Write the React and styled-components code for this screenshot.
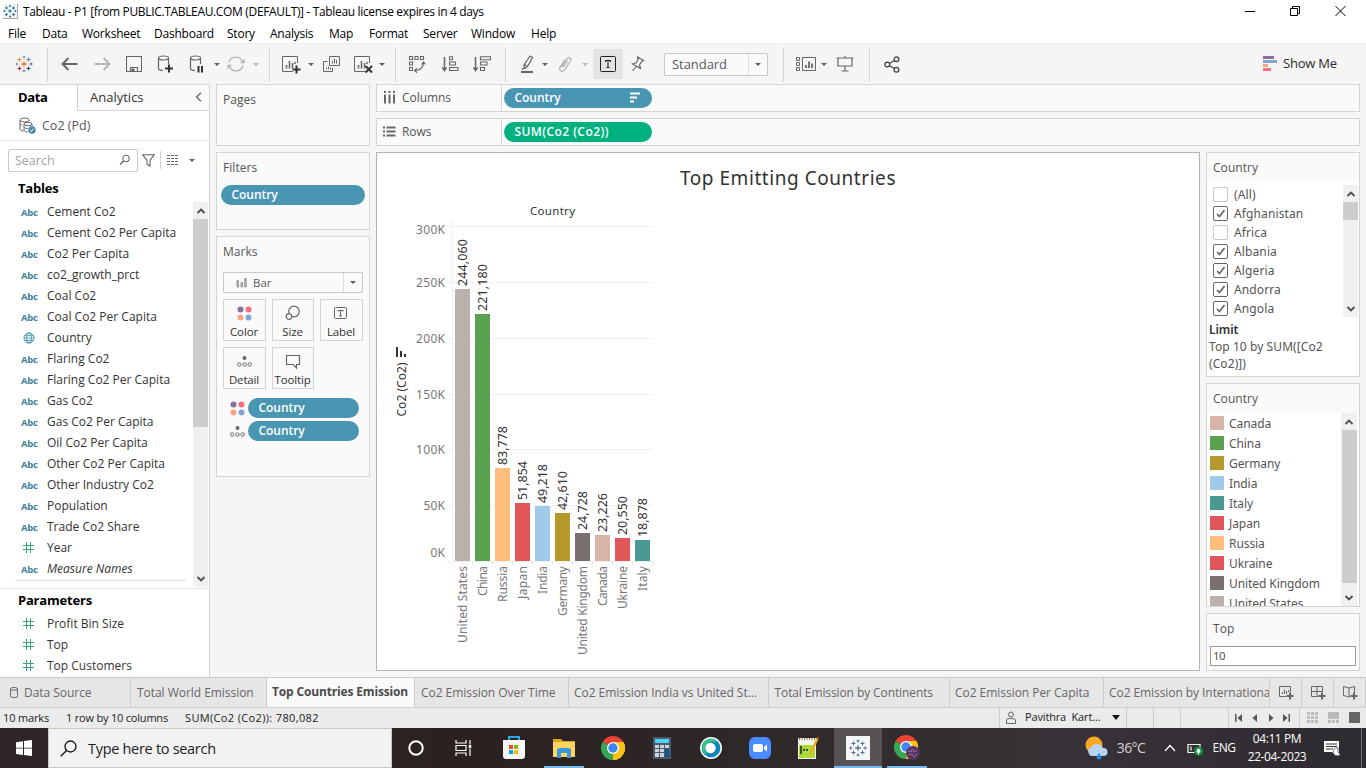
import React from "react";
import styled, { createGlobalStyle, css } from "styled-components";

const ui = '"Open Sans", "Noto Sans", sans-serif';
const chartFont = '"Noto Sans", "Open Sans", sans-serif';
const blue = "#4996b2";

const Global = createGlobalStyle`
  * { box-sizing: border-box; }
  html, body { margin: 0; padding: 0; }
  body { width: 1366px; height: 768px; overflow: hidden; font-family: ${ui}; font-size: 12px; color: #333; }
  svg { display: block; flex: none; }
`;

const Window = styled.div`
  width: 1366px; height: 768px; display: flex; flex-direction: column;
  background: #f5f5f5; white-space: nowrap; overflow: hidden;
`;
const TitleBar = styled.header`
  height: 23px; background: #fff; display: flex; align-items: center; padding-left: 3px; color: #000;
`;
const TitleText = styled.span`margin-left: 5px; font-size: 12px; letter-spacing: -0.34px;`;
const WindowButtons = styled.div`
  margin-left: auto; margin-right: 20px; margin-top: -2px; display: flex; gap: 35px;
`;
const MenuBar = styled.nav`
  height: 20px; background: #fff; display: flex; align-items: center; padding-left: 8px; color: #000; font-size: 12px;
`;
const MenuItem = styled.span`width: ${p => p.$w}px; letter-spacing: -0.22px;`;
const Toolbar = styled.div`
  height: 41px; background: #f5f5f5; border-top: 1px solid #f0f0f0; display: flex; align-items: center;
`;
const Slot = styled.div`
  width: ${p => p.$w}px; height: ${p => p.$h || 30}px; flex: none; display: flex; align-items: center; justify-content: center;
  margin-left: ${p => p.$gap || 0}px; background: ${p => (p.$on ? "#e4e4e4" : "transparent")};
`;
const ToolRule = styled.div`
  width: 1px; height: 35px; background: #d4d4d4; flex: none; margin-left: ${p => p.$gap || 0}px;
`;
const Caret = styled.i`
  width: 0; height: 0; flex: none; border: ${p => p.$s || 3}px solid transparent; border-bottom: 0;
  border-top: ${p => (p.$s || 3) + (p.$tall ? 1 : 0)}px solid ${p => p.$c || "#5f5f5f"};
`;
const Select = styled.div`
  width: ${p => p.$w}px; height: ${p => p.$h}px; border: 1px solid #c9c9c9; border-radius: 1px;
  display: flex; align-items: center; background: #fafafa; margin-left: ${p => p.$gap || 0}px;
`;
const SelectText = styled.span`
  flex: 1; padding-left: ${p => p.$pad}px; font-size: ${p => p.$fs}px; color: #5a5a5a; display: flex; gap: 6px; align-items: center;
  letter-spacing: ${p => p.$ls || 0}px;
`;
const SelectArrow = styled.span`
  width: 19px; align-self: stretch; border-left: 1px solid #dedede; display: flex; align-items: center; justify-content: center;
`;
const ShowMe = styled.div`
  margin-left: auto; width: 103px; display: flex; align-items: center; gap: 6px; font-size: 13px; color: #2b2b2b; letter-spacing: -0.2px;
  padding-bottom: 2px;
`;

const Workspace = styled.main`height: 593px; display: flex; background: #f5f5f5;`;
const DataPane = styled.aside`
  width: 210px; border-right: 1px solid #d4d4d4; background: #fff; display: flex; flex-direction: column; overflow: hidden;
`;
const PaneTabs = styled.div`height: 27px; flex: none; display: flex;`;
const PaneTab = styled.div`
  height: 27px; display: flex; align-items: center; font-size: 13px; border-top: 1px solid #d4d4d4; padding-bottom: 2px;
  ${p => p.$active
    ? css`width: 77px; padding-left: 18px; font-weight: 700; color: #000; letter-spacing: -0.35px;`
    : css`flex: 1; padding: 0 7px 1px 12px; border-left: 1px solid #d4d4d4; border-bottom: 1px solid #d4d4d4; justify-content: space-between; background: #fafafa; color: #333;`}
`;
const SourceRow = styled.div`
  height: 30px; flex: none; display: flex; align-items: center; padding: 0 0 1px 19px; gap: 6px;
  border-bottom: 1px solid #e2e2e2; color: #555; font-size: 12.5px;
`;
const SearchRow = styled.div`height: 38px; flex: none; display: flex; align-items: center; padding-left: 8px;`;
const SearchField = styled.div`
  width: 130px; height: 23px; border: 1px solid #c9c9c9; border-radius: 2px; display: flex; align-items: center;
  justify-content: space-between; padding: 0 6px; color: #a5a5a5; font-size: 12.5px; margin-right: 4px;
`;
const SearchRule = styled.div`width: 1px; height: 18px; background: #d4d4d4; margin: 0 6px 0 5px;`;
const PaneHeading = styled.h2`
  height: ${p => p.$h}px; flex: none; margin: 0; padding-left: 18px; font-size: 13px; line-height: ${p => p.$lh}px; font-weight: 700; color: #000;
  letter-spacing: -0.2px;
`;
const FieldArea = styled.div`height: 387px; flex: none; display: flex; border-bottom: 1px solid #e2e2e2;`;
const FieldList = styled.div`width: 193px; flex: none; margin-top: -1px;`;
const FieldRow = styled.div`
  height: 21px; display: flex; align-items: center; font-size: 12px; color: #333; letter-spacing: 0;
  font-style: ${p => (p.$italic ? "italic" : "normal")};
`;
const FieldIcon = styled.span`
  width: 26px; margin-left: 21px; flex: none; display: flex; font-style: normal; font-size: 9.5px; font-weight: 700; color: #417f99;
  padding-top: 1px; letter-spacing: -0.3px;
  svg { margin-left: 2px; margin-top: -1px; }
`;
const ListEnd = styled.div`height: 1px; margin: 1px 7px 0 15px; background: #dcdcdc;`;

const Scrollbar = styled.div`
  width: ${p => p.$w || 15}px; height: ${p => p.$h}px; margin-top: ${p => p.$mt || 0}px; flex: none; background: #f0f0f0;
  display: flex; flex-direction: column; align-items: center;
`;
const ScrollEnd = styled.div`height: 17px; flex: none; display: flex; align-items: center;`;
const ScrollThumb = styled.div`width: 15px; flex: none; height: ${p => p.$h}px; background: #cdcdcd; margin-bottom: auto;`;

const CardColumn = styled.div`width: 154px; margin-left: 6px; display: flex; flex-direction: column; gap: 6px;`;
const Card = styled.section`height: ${p => p.$h}px; border: 1px solid #d4d4d4; background: #fafafa; overflow: hidden; flex: none;`;
const CardTitle = styled.h3`
  margin: 0; height: ${p => p.$h || 32}px; line-height: 30px; padding-left: 6px; font-size: 12px; font-weight: 400; color: #555;
  letter-spacing: 0.05px;
`;
const Pill = styled.div`
  height: 20px; width: ${p => p.$w}px; border-radius: 10px; background: ${p => p.$c || blue}; color: #fff;
  font-size: 12px; font-weight: 600; line-height: 18px; padding: 0 10px 1px 10.500px; margin-left: ${p => p.$ml || 0}px;
  display: flex; align-items: center; justify-content: space-between; letter-spacing: ${p => p.$ls || -0.05}px;
`;
const MarksBody = styled.div`padding: 3px 6px 0;`;
const MarkButtons = styled.div`
  display: grid; grid-template-columns: 43px 42px 43px; column-gap: 6px; row-gap: 6px; margin-top: 6px;
`;
const MarkButton = styled.div`
  height: 42px; border: 1px solid #d4d4d4; display: flex; flex-direction: column; align-items: center;
  justify-content: space-between; padding: 4px 1px 1px 0; font-size: 11.5px; line-height: 15px; color: #333; letter-spacing: -0.15px;
`;
const MarkPills = styled.div`display: flex; flex-direction: column; gap: 3px; margin: 9px 0 0 5px;`;
const MarkPillRow = styled.div`display: flex; align-items: center; gap: 2px;`;

const Stage = styled.div`width: 984px; margin-left: 6px; display: flex; flex-direction: column;`;
const Shelf = styled.div`
  height: 28px; margin-bottom: 6px; border: 1px solid #d4d4d4; background: #fafafa; display: flex; align-items: center;
`;
const ShelfLabel = styled.div`
  width: 125px; height: 26px; border-right: 1px solid #d4d4d4; padding: 0 0 1px 6px; display: flex; align-items: center; gap: 6px;
  font-size: 12px; color: #555; letter-spacing: -0.05px;
`;
const StageBody = styled.div`display: flex; gap: 6px;`;
const View = styled.section`width: 824px; height: 519px; border: 1px solid #b4b4b4; background: #fff;`;
const SheetTitle = styled.h1`
  margin: 0; height: 50px; line-height: 51px; text-align: center; font-family: ${chartFont}; font-size: 19px; font-weight: 400;
  color: #333; letter-spacing: 0.55px;
`;
const Side = styled.div`width: 154px; display: flex; flex-direction: column; gap: 6px;`;
const SideBody = styled.div`background: #fff; display: flex; justify-content: space-between; height: ${p => p.$h}px; padding: ${p => p.$p};`;
const CheckList = styled.div`padding-top: 3px;`;
const CheckRow = styled.div`
  height: 19px; display: flex; align-items: center; gap: 6px; font-family: ${chartFont}; font-size: 12px; color: #555; letter-spacing: 0.12px;
`;
const CheckBox = styled.span`
  width: 15px; height: 15px; border: 1px solid ${p => (p.$on ? "#666" : "#c9c9c9")}; border-radius: 2px; background: #fff;
  display: flex; align-items: center; justify-content: center;
`;
const Limit = styled.div`
  height: 61px; background: #fff; padding: 5px 2px 0; font-family: ${chartFont}; line-height: 17px; font-size: 12px; color: #555; letter-spacing: 0.08px;
  strong { display: block; color: #333; font-weight: 600; letter-spacing: -0.1px; }
`;
const LegendList = styled.div`overflow: hidden; height: 193px; padding-top: 3px;`;
const LegendRow = styled.div`
  height: 20px; display: flex; gap: 5px; font-family: ${chartFont}; font-size: 12px; line-height: 16px; color: #555; letter-spacing: -0.08px;
`;
const Swatch = styled.span`width: 14px; height: 14px; background: ${p => p.$c};`;
const TopField = styled.div`
  margin: 0 3px; height: 20px; border: 1px solid #9a9a9a; background: #fff; padding-left: 2px; font-family: ${chartFont}; font-size: 11.5px; line-height: 18px;
  color: #555; letter-spacing: -0.5px;
`;

const SheetTabs = styled.div`
  height: 31px; flex: none; display: flex; background: #e6e6e6; border-top: 1px solid #c9c9c9; border-bottom: 1px solid #d0d0d0;
`;
const SheetTab = styled.div`
  width: ${p => p.$w}px; flex: none; border-right: 1px solid #cdcdcd; display: flex; align-items: center; padding-left: ${p => p.$pad || 6}px;
  gap: 5px; overflow: hidden; font-size: 12px; color: #666; letter-spacing: ${p => p.$ls || -0.04}px;
  ${p => p.$active && css`background: #fafafa; font-weight: 700; color: #4a4a4a; padding-bottom: 2px;`}
`;
const NewTab = styled.div`width: ${p => p.$w}px; border-right: 1px solid #cdcdcd; display: flex; align-items: center; justify-content: center;`;
const StatusBar = styled.footer`
  height: 20px; flex: none; background: #ebebeb; display: flex; align-items: center; padding-left: 3px; font-size: 11px; color: #222;
`;
const StatusText = styled.span`width: ${p => p.$w}px; flex: none; letter-spacing: ${p => p.$ls || -0.15}px; padding-bottom: 2px;`;
const StatusCell = styled.div`
  width: ${p => p.$w}px; height: 20px; border-left: 1px solid #cdcdcd; display: flex; align-items: center; gap: ${p => p.$gap || 0}px;
  padding: 0 0 1px ${p => p.$pad || 0}px; flex: none; margin-left: ${p => (p.$push ? "auto" : 0)};
`;

const Taskbar = styled.div`
  height: 40px; flex: none; display: flex; align-items: center;
  background: linear-gradient(90deg, #2f2727 0, #2a2120 35%, #302a2b 60%, #373237 78%, #2e2b30 100%);
`;
const TaskCell = styled.div`
  width: ${p => p.$w}px; height: 40px; flex: none; display: flex; align-items: center; justify-content: center;
  margin-left: ${p => p.$ml || 0}px; background: ${p => (p.$on ? "#595254" : "transparent")};
  border-bottom: ${p => (p.$line ? "2px solid #76b9ed" : "0")}; border-top: ${p => (p.$line ? "2px solid transparent" : "0")};
`;
const TaskSearch = styled.div`
  width: 344px; height: 40px; background: #f2f2f2; border: 1px solid #c8c8c8; display: flex; align-items: center; padding-left: 11px; gap: 11px;
  font-size: 14.5px; color: #222; letter-spacing: -0.3px;
`;
const TrayText = styled.div`
  width: ${p => p.$w}px; flex: none; color: ${p => p.$c || "#fff"}; font-size: ${p => p.$fs}px; letter-spacing: ${p => p.$ls || 0}px;
  text-align: center; line-height: 18px; margin-left: ${p => p.$ml || 0}px;
`;
const TrayEdge = styled.div`width: 1px; height: 40px; background: #77747a; margin-left: auto; margin-right: 4px;`;

const Svg = ({ w, h = w, children, c = "#666", s = 1, ...rest }) => (
  <svg width={w} height={h} viewBox={`0 0 ${w} ${h}`} fill="none" stroke={c} strokeWidth={s} {...rest}>{children}</svg>
);

const plus = (x, y, r) => `M${x - r} ${y}h${2 * r}M${x} ${y - r}v${2 * r}`;

const TableauMark = ({ size = 18, mono }) => {
  const k = c => mono || c;
  return (
    <svg width={size} height={size} viewBox="0 0 18 18" fill="none" strokeWidth="1">
      <path d={plus(9, 9, 2.8)} stroke={k("#e8762c")} strokeWidth="1.3" />
      <path d={plus(4.5, 4.5, 2)} stroke={k("#eb912c")} />
      <path d={plus(13.5, 4.5, 2)} stroke={k("#59879b")} />
      <path d={plus(4.5, 13.5, 2)} stroke={k("#c72035")} />
      <path d={plus(13.5, 13.5, 2)} stroke={k("#1f457e")} />
      <path d={plus(9, 2, 1.5)} stroke={k("#7199a6")} />
      <path d={plus(9, 16, 1.5)} stroke={k("#7b7b9b")} />
      <path d={plus(1.8, 9, 1.5)} stroke={k("#7199a6")} />
      <path d={plus(16.2, 9, 1.5)} stroke={k("#5c6692")} />
    </svg>
  );
};

const Cylinder = () => <><ellipse cx="7.500" cy="4" rx="5" ry="2" /><path d="M2.500 4v10.500c0 1.200 1.600 2 4.500 2M12.500 4v6" /></>;
const SheetFrame = () => <><path d="M16.500 9V2.500h-15v15H12" /><path d="M5.500 14.500V11M8.500 14.500V7M11.500 14.500V9M14 10V8" strokeWidth="1.500" /></>;
const Globe = () => <Svg w={12} c="#4796b3"><circle cx="6" cy="6" r="5" /><ellipse cx="6" cy="6" rx="2.300" ry="5" /><path d="M1 6h10M1.800 3.500h8.400M1.800 8.500h8.400" strokeWidth=".8" /></Svg>;
const Hash = () => <Svg w={11} c="#3ba17c"><path d="M3.500 0v11M7.500 0v11M0 3.500h11M0 7.500h11" /></Svg>;
const Chevron = ({ up }) => <Svg w={10} h={8} c="#505050" s={1.9}><path d={up ? "M1.500 6 5 2.500 8.500 6" : "M1.500 2 5 5.500 8.500 2"} /></Svg>;
const ColorDots = ({ h = 15 }) => (
  <svg width="15" height={h} viewBox={`0 ${(15 - h) / 2 - (h > 15 ? 0.5 : 0)} 15 ${h}`}>
    <circle cx="3.500" cy="3.500" r="3" fill="#8a6e9d" /><circle cx="11.500" cy="3.500" r="3" fill="#fa6e80" /><circle cx="3.500" cy="11.500" r="3" fill="#f2a57e" /><circle cx="11.500" cy="11.500" r="3" fill="#82a5cf" />
  </svg>
);
const DetailIcon = ({ h = 13 }) => (
  <svg width="15" height={h} viewBox={`0 ${(13 - h) / 2 - (h > 13 ? 0.5 : 0)} 15 ${h}`} fill="none" stroke="#666">
    <circle cx="7.500" cy="3" r="2" fill="#666" stroke="none" /><circle cx="2.300" cy="9.500" r="1.700" /><circle cx="7.500" cy="9.500" r="1.700" /><circle cx="12.700" cy="9.500" r="1.700" />
  </svg>
);
const BoxT = ({ w, h, c }) => <Svg w={w} h={h} c={c}><rect x=".5" y=".5" width={w - 1} height={h - 1} rx="1" /><path d="M5.500 6V4.500h5V6M8 4.500v7M6.500 11.500h3" strokeWidth="1.100" /></Svg>;

const fields = ["Cement Co2", "Cement Co2 Per Capita", "Co2 Per Capita", "co2_growth_prct", "Coal Co2", "Coal Co2 Per Capita", "Country", "Flaring Co2", "Flaring Co2 Per Capita", "Gas Co2", "Gas Co2 Per Capita", "Oil Co2 Per Capita", "Other Co2 Per Capita", "Other Industry Co2", "Population", "Trade Co2 Share", "Year", "Measure Names"];

const Field = ({ name, type = "abc", italic }) => (
  <FieldRow $italic={italic}>
    <FieldIcon>{type === "abc" ? "Abc" : type === "geo" ? <Globe /> : <Hash />}</FieldIcon>{name}
  </FieldRow>
);

const Scroll = ({ h, thumb, w, mt }) => (
  <Scrollbar $h={h} $w={w} $mt={mt}><ScrollEnd><Chevron up /></ScrollEnd><ScrollThumb $h={thumb} /><ScrollEnd><Chevron /></ScrollEnd></Scrollbar>
);

const bars = [
  ["United States", "244,060", 289, "#bab0ac", 77], ["China", "221,180", 314, "#59a14f", 30],
  ["Russia", "83,778", 468, "#ffbe7d", 36], ["Japan", "51,854", 503, "#e15759", 33],
  ["India", "49,218", 506, "#a0cbe8", 28], ["Germany", "42,610", 513, "#b6992d", 50],
  ["United Kingdom", "24,728", 533, "#79706e", 89], ["Canada", "23,226", 535, "#d7b5a6", 40],
  ["Ukraine", "20,550", 538, "#e15759", 43], ["Italy", "18,878", 540, "#499894", 25],
];
const ticks = [["300K", 226.5, 234], ["250K", 282.5, 287], ["200K", 338.5, 343], ["150K", 394.5, 399], ["100K", 449.5, 454], ["50K", 505.5, 510], ["0K", 561.5, 557]];

const Chart = () => (
  <svg width="290" height="464" viewBox="377 203 290 464" fontFamily={chartFont}>
    <text x="552.500" y="215" fontSize="11.500" fill="#333" textAnchor="middle" textLength="45">Country</text>
    {ticks.map(([t, y, b]) => (
      <g key={t}>
        <path d={`M447 ${y}H653`} stroke="#f0f0f0" />
        <text x="445" y={b} fontSize="12" fill="#787878" textAnchor="end" textLength={t.length === 4 ? 29 : t.length === 3 ? 21.5 : 14.5}>{t}</text>
      </g>
    ))}
    <path d="M452.500 220V565" stroke="#f0f0f0" />
    {bars.map(([name, value, top, fill, len], i) => {
      const x = 455 + i * 20;
      return (
        <g key={name}>
          <path d={`M${x + 17.5} 561v4`} stroke="#e8e8e8" />
          <rect x={x} y={top} width="15" height={561 - top} fill={fill} />
          <text transform={`translate(${x + 12} ${top - 3}) rotate(-90)`} fontSize="12.500" fill="#333" textLength={value.length === 7 ? 47 : 39}>{value}</text>
          <text transform={`translate(${x + 12} 566) rotate(-90)`} fontSize="12" fill="#787878" textAnchor="end" textLength={len}>{name}</text>
        </g>
      );
    })}
    <text transform="translate(406 416.500) rotate(-90)" fontSize="12" fill="#333" textLength="54">Co2 (Co2)</text>
    <path d="M397 347v10M401 351v6M405 354v3" stroke="#333" strokeWidth="2" />
  </svg>
);

const ChromeLogo = () => (
  <svg width="24" height="24" viewBox="0 0 24 24">
    <path d="M12 12 1.600 6A12 12 0 0 1 22.400 6Z" fill="#ea4335" /><path d="M12 12 22.400 6A12 12 0 0 1 12 24Z" fill="#fbbc05" /><path d="M12 12V24A12 12 0 0 1 1.600 6Z" fill="#34a853" />
    <path d="M12 6h10.400A12 12 0 0 1 12 24l5.200-9Z" fill="#fbc116" /><circle cx="12" cy="12" r="6" fill="#fff" /><circle cx="12" cy="12" r="4.700" fill="#4285f4" />
  </svg>
);

const Tools = () => (
  <Toolbar>
    <Slot $w={47}><TableauMark /></Slot>
    <ToolRule />
    <Slot $w={33} $gap={5}><Svg w={17} h={14} s={1.900}><path d="M16.500 7H1.500M7.500 1l-6 6 6 6" /></Svg></Slot>
    <Slot $w={32}><Svg w={17} h={14} s={1.900} c="#b5b5b5"><path d="M.5 7h15M9.500 1l6 6-6 6" /></Svg></Slot>
    <Slot $w={32}><Svg w={16} s={1.100}><path d="M.5.5h15v15H.5zM4.500 15.500v-4h7v4" /><path d="M6 13h2v2H6z" fill="#666" /></Svg></Slot>
    <Slot $w={32}><Svg w={20} h={20} s={1.200}><Cylinder /><path d={plus(13, 14.500, 4)} stroke="#333" strokeWidth="2" /></Svg></Slot>
    <Slot $w={31}><Svg w={20} h={20} s={1.200}><Cylinder /><path d="M10.500 12v6.500M14 12v6.500" stroke="#333" strokeWidth="2" /></Svg></Slot>
    <Slot $w={8}><Caret /></Slot>
    <Slot $w={30}><Svg w={18} h={16} s={1.300} c="#b5b5b5"><path d="M2 6.500A7 7 0 0 1 15.500 6M16 9.500A7 7 0 0 1 2.500 10" /><path d="M17.500 3v4h-4zM.5 13V9h4z" fill="#b5b5b5" strokeWidth=".5" /></Svg></Slot>
    <Slot $w={10}><Caret $c="#b5b5b5" /></Slot>
    <ToolRule $gap={8} />
    <Slot $w={33} $gap={4}><Svg w={20}><SheetFrame /><path d={plus(15.500, 15.500, 4)} stroke="#333" strokeWidth="2" /></Svg></Slot>
    <Slot $w={7}><Caret /></Slot>
    <Slot $w={34}><Svg w={18} h={18}><path d="M7.500 1.500h10v9h-10zM5.500 6.500h-4v10h9v-4" /><path d="M10.500 8.500V6M12.500 8.500V3.500M14.500 8.500V5M4.500 14.500v-2M6.500 14.500v-3M8.500 14.500v-2" /></Svg></Slot>
    <Slot $w={29}><Svg w={20}><SheetFrame /><path d="m12.500 12 6.500 6.500M19 12l-6.500 6.500" stroke="#333" strokeWidth="2" /></Svg></Slot>
    <Slot $w={10}><Caret /></Slot>
    <ToolRule $gap={8} />
    <Slot $w={34} $gap={4}><Svg w={18} h={18} s={1.100}><path d="M1.500 1.500h3v3h-3zM7 1.500h3v3H7zM12.500 1.500h3v3h-3zM1.500 7h3v3h-3zM1.500 12.500h3v3h-3z" /><path d="M15.500 7.500c0 5-3 7.500-8.500 8M13.500 9.500l2-2.500 2 2.500M9 13.300l-2.500 2.200L9 17.700" /></Svg></Slot>
    <Slot $w={32}><Svg w={19} h={16} s={1.100}><path d="M3.500 1v12M1.300 11.500l2.200 3 2.200-3" strokeWidth="1.500" /><path d="M8.500.8h3v3h-3zM8.500 6h6v3h-6zM8.500 11.500h8.500v3H8.500z" /></Svg></Slot>
    <Slot $w={32}><Svg w={19} h={16} s={1.100}><path d="M2.500 1v12M.3 11.500l2.200 3 2.200-3" strokeWidth="1.500" /><path d="M7.500.8h10v3h-10zM7.500 6H14v3H7.500zM7.500 11.500h4v3h-4z" /></Svg></Slot>
    <ToolRule $gap={7} />
    <Slot $w={28} $gap={7}><Svg w={14} h={18} s={1.200}><path d="M10 1 12.500 2.500 7.500 11.500 4.500 13.500 4 10zM4.500 9.500l3 2M4 13l-2 1.500" /><path d="M1 17h12" strokeWidth="2" /></Svg></Slot>
    <Slot $w={8}><Caret /></Slot>
    <Slot $w={32}><Svg w={14} h={17} s={1.200} c="#b0b0b0"><path d="m3.500 11 5.500-8c1.800-2.500 5-.7 3.500 2L7 13.500c-2.300 3.500-7 1-4.800-2.500l5-7.500M5.200 11.500l4.500-6.500" /></Svg></Slot>
    <Slot $w={8}><Caret $c="#b5b5b5" /></Slot>
    <Slot $w={30} $gap={4} $on><BoxT w={16} h={16} c="#222" /></Slot>
    <Slot $w={28}><Svg w={15} h={16} s={1.200}><path d="m7.500 1 6 3.500-1.800 1L9.500 9l1 3.500-8-4.500L6 7l2-3.500zM6.500 10 2.500 15" /></Svg></Slot>
    <Select $w={104} $h={23} $gap={13}><SelectText $pad={7} $fs={13} $ls={-0.05}>Standard</SelectText><SelectArrow><Caret $s={3.5} /></SelectArrow></Select>
    <ToolRule $gap={15} />
    <Slot $w={28} $gap={8}><Svg w={20} h={15}><path d="M.5.5h3v3h-3zM.5 5.500h3v3h-3zM.5 10.500h3v3h-3zM6.500.5h13v13h-13z" /><path d="M10 11V8M13 11V4.500M16 11V6.500" strokeWidth="1.800" /></Svg></Slot>
    <Slot $w={7}><Caret /></Slot>
    <Slot $w={36}><Svg w={18} h={16} s={1.200}><path d="M.5 2h17M2 2v8h14V2M9 10v5M5.500 15h7M9 0v2" /></Svg></Slot>
    <ToolRule $gap={6} />
    <Slot $w={32} $gap={6}><Svg w={16} h={17} c="#444" s={1.300}><circle cx="3.300" cy="8.500" r="2.400" /><circle cx="12.500" cy="3.300" r="2.400" /><circle cx="12.500" cy="13.700" r="2.400" /><path d="m5.500 7.300 5-2.800M5.500 9.700l5 2.800" /></Svg></Slot>
    <ShowMe>
      <svg width="14" height="15"><path fill="#8a6e9d" d="M0 0h11v3H0z" /><path fill="#82a5cf" d="M0 4h14v3H0z" /><path fill="#f2a57e" d="M0 8h5v3H0z" /><path fill="#fa6e80" d="M0 12h8v3H0z" /></svg>
      Show Me
    </ShowMe>
  </Toolbar>
);

const DataSide = () => (
  <DataPane>
    <PaneTabs><PaneTab $active>Data</PaneTab><PaneTab>Analytics<Svg w={7} h={10} s={1.300}><path d="M6 .8 1.500 5 6 9.200" /></Svg></PaneTab></PaneTabs>
    <SourceRow>
      <Svg w={17} h={17}><ellipse cx="5.500" cy="3" rx="4.500" ry="2" /><path d="M1 3v9c0 1 1.500 2 3.500 2M1 6c0 1 1 1.500 2 2M10 3v1" /><ellipse cx="9" cy="7" rx="4" ry="1.800" /><path d="M5 7v6c0 1.500 2 2 4 2M13 7v2M5 10.500c1 .8 2 1 4 1" /><circle cx="13" cy="13" r="3.700" fill="#3d8aa8" stroke="none" /><path d="m11 13 1.400 1.500 2.400-3" stroke="#fff" /></Svg>
      Co2 (Pd)
    </SourceRow>
    <SearchRow>
      <SearchField>Search<Svg w={12} c="#666" s={1.100}><circle cx="7" cy="4.500" r="3.200" /><path d="M4.700 7 1 10.500" strokeWidth="1.500" /></Svg></SearchField>
      <Svg w={13} s={1.100}><path d="M.8.8h11.400L8 6.300v6L5 10V6.300z" /></Svg>
      <SearchRule />
      <Svg w={12} h={10}><path d="M0 .5h12M0 3.500h12M0 6.500h12M0 9.500h12" strokeWidth="1.200" strokeDasharray="3 1" /></Svg>
      <Slot $w={26}><Caret $s={3.5} /></Slot>
    </SearchRow>
    <PaneHeading $h={23} $lh={18}>Tables</PaneHeading>
    <FieldArea>
      <FieldList>
        {fields.map(f => <Field key={f} name={f} type={f === "Country" ? "geo" : f === "Year" ? "num" : "abc"} italic={f === "Measure Names"} />)}
        <ListEnd />
      </FieldList>
      <Scroll h={385} thumb={208} />
    </FieldArea>
    <PaneHeading $h={24} $lh={23}>Parameters</PaneHeading>
    {["Profit Bin Size", "Top", "Top Customers"].map(f => <Field key={f} name={f} type="num" />)}
  </DataPane>
);

const Cards = () => (
  <CardColumn>
    <Card $h={62}><CardTitle>Pages</CardTitle></Card>
    <Card $h={78}><CardTitle>Filters</CardTitle><Pill $w={144} $ml={4}>Country</Pill></Card>
    <Card $h={241}>
      <CardTitle>Marks</CardTitle>
      <MarksBody>
        <Select $w={140} $h={21}><SelectText $pad={12} $fs={11.5}><Svg w={11} h={11} c="#999"><path d="M1 3.500h1.500V10H1zM5 5.500h1.500V10H5zM8.700 1.500h1.500V10H8.700z" fill="#bbb" /></Svg>Bar</SelectText><SelectArrow><Caret $s={3.5} /></SelectArrow></Select>
        <MarkButtons>
          <MarkButton><ColorDots h={18} />Color</MarkButton>
          <MarkButton><Svg w={16} h={18} s={1.200}><circle cx="9" cy="7.500" r="5.300" /><circle cx="4" cy="12.500" r="2.800" fill="#fafafa" /></Svg>Size</MarkButton>
          <MarkButton><Svg w={14} h={18}><rect x=".5" y="3.500" width="12" height="11" rx="1" /><path d="M4 7.500V6.500h5v1M6.500 6.500v5.500M5 12h3" strokeWidth="1.100" /></Svg>Label</MarkButton>
          <MarkButton><DetailIcon h={18} />Detail</MarkButton>
          <MarkButton><Svg w={16} h={18} s={1.200}><path d="M1.500 3.500h13v9h-3v3.500L8 12.500H1.500z" /></Svg>Tooltip</MarkButton>
        </MarkButtons>
        <MarkPills>
          <MarkPillRow><Slot $w={18} $h={20}><ColorDots /></Slot><Pill $w={111}>Country</Pill></MarkPillRow>
          <MarkPillRow><Slot $w={18} $h={20}><DetailIcon /></Slot><Pill $w={111}>Country</Pill></MarkPillRow>
        </MarkPills>
      </MarksBody>
    </Card>
  </CardColumn>
);

const countries = ["(All)", "Afghanistan", "Africa", "Albania", "Algeria", "Andorra", "Angola"];
const legend = ["Canada", "China", "Germany", "India", "Italy", "Japan", "Russia", "Ukraine", "United Kingdom", "United States"];

const SideCards = () => (
  <Side>
    <Card $h={225}>
      <CardTitle $h={29}>Country</CardTitle>
      <SideBody $h={134} $p="0 1px 0 6px">
        <CheckList>
          {countries.map(c => {
            const on = c !== "(All)" && c !== "Africa";
            return <CheckRow key={c}><CheckBox $on={on}>{on && <Svg w={10} h={9} s={1.700}><path d="M1 5l2.500 2.500L8.500 1" /></Svg>}</CheckBox>{c}</CheckRow>;
          })}
        </CheckList>
        <Scroll h={132} thumb={18} mt={3} />
      </SideBody>
      <Limit><strong>Limit</strong>Top 10 by SUM([Co2<br />(Co2)])</Limit>
    </Card>
    <Card $h={224}>
      <CardTitle $h={29}>Country</CardTitle>
      <SideBody $h={193} $p="0 2px 0 3px">
        <LegendList>{legend.map(n => <LegendRow key={n}><Swatch $c={bars.find(b => b[0] === n)[3]} />{n}</LegendRow>)}</LegendList>
        <Scroll h={193} thumb={153} w={16} />
      </SideBody>
    </Card>
    <Card $h={58}><CardTitle $h={32}>Top</CardTitle><TopField>10</TopField></Card>
  </Side>
);

const Tray = () => (
  <>
    <TaskCell $w={30} $ml={154}>
      <svg width="26" height="26"><circle cx="11" cy="10" r="8.500" fill="#f9a825" /><path d="M8 21a5 5 0 0 1 0-9 7 7 0 0 1 12 1 4 4 0 0 1 1 8z" fill="#b9d3f5" /><path d="m16 18 2.500 4a2.500 2.500 0 1 1-5 0z" fill="#2586e8" /></svg>
    </TaskCell>
    <TrayText $w={36} $fs={14} $c="#d5d3d3" $ls={-0.6} $ml={2}>36°C</TrayText>
    <TaskCell $w={22} $ml={10}><Svg w={12} h={8} c="#fff" s={1.300}><path d="m1 7 5-5.500L11 7" /></Svg></TaskCell>
    <TaskCell $w={28}><Svg w={17} h={15} c="#fff" s={1.200}><path d="M1 3.500h12v8H1zM4 5.500v4" /><circle cx="11.500" cy="10" r="4.500" fill="#13903f" stroke="none" /><path d="M11.500 7.500c-3 3-1 4.500 0 4.500s3-1.500 0-4.500zm0 3v3.500" fill="#fff" strokeWidth=".7" /></Svg></TaskCell>
    <TrayText $w={30} $fs={12} $ls={-0.4}>ENG</TrayText>
    <TrayText $w={66} $fs={12} $ls={-0.4} $ml={5}>04:11 PM<br />22-04-2023</TrayText>
    <TaskCell $w={24} $ml={10}><svg width="18" height="17"><path d="M1 1h15v11h-3v4l-4-4H1z" fill="#fff" /><path d="M3 4h11M3 6.500h11M3 9h7" stroke="#333" /><path d="M15.500 8a4 4 0 1 0 2 6 4 4 0 0 1-2-6z" fill="#fff" stroke="#333" strokeWidth=".7" /></svg></TaskCell>
    <TrayEdge />
  </>
);

const menu = [["File", 34], ["Data", 40], ["Worksheet", 72], ["Dashboard", 73], ["Story", 43], ["Analysis", 59], ["Map", 40], ["Format", 54], ["Server", 48], ["Window", 60], ["Help", 30]];
const titleMark = [[7, 7, 2], [3.5, 4, 1.5], [10.5, 4, 1.5], [3.5, 10.5, 1.5], [10.5, 10.5, 1.5], [7, 2, 1], [7, 12.5, 1], [1.5, 7, 1], [12.5, 7, 1]];

export default function App() {
  return (
    <Window>
      <Global />
      <TitleBar>
        <svg width="15" height="15"><path d="M0 0h15v15H0z" fill="#f3f3f3" /><path d="M0 14.500h14.500V0" fill="none" stroke="#aaa" /><path d={titleMark.map(a => plus(...a)).join("")} stroke="#2b7a9f" /></svg>
        <TitleText>Tableau - P1 [from PUBLIC.TABLEAU.COM (DEFAULT)] - Tableau license expires in 4 days</TitleText>
        <WindowButtons>
          <Svg w={10} c="#000"><path d="M0 5.500h10" /></Svg>
          <Svg w={10} c="#000"><path d="M.5 2.500h7v7h-7zM2.500 2V.5h7v7H8" /></Svg>
          <Svg w={11} h={10} c="#000"><path d="m.5 0 10 10M10.500 0l-10 10" /></Svg>
        </WindowButtons>
      </TitleBar>
      <MenuBar>{menu.map(([t, w]) => <MenuItem key={t} $w={w}>{t}</MenuItem>)}</MenuBar>
      <Tools />
      <Workspace>
        <DataSide />
        <Cards />
        <Stage>
          <Shelf>
            <ShelfLabel><Svg w={13} h={13}><path d="M2 0v2M6.500 0v2M11 0v2M2 3.500v9M6.500 3.500v9M11 3.500v9" strokeWidth="2" /></Svg>Columns</ShelfLabel>
            <Pill $w={148} $ml={2}>Country<Svg w={12} h={11} c="#fff" s={2}><path d="M0 1.500h10M0 5.500h7M0 9.500h4" /></Svg></Pill>
          </Shelf>
          <Shelf>
            <ShelfLabel><Svg w={13} h={11}><path d="M0 1.500h2M0 5.500h2M0 9.500h2M3.500 1.500h9M3.500 5.500h9M3.500 9.500h9" strokeWidth="2" /></Svg>Rows</ShelfLabel>
            <Pill $w={148} $ml={2} $c="#00b180" $ls={0.42}>SUM(Co2 (Co2))</Pill>
          </Shelf>
          <StageBody>
            <View><SheetTitle>Top Emitting Countries</SheetTitle><Chart /></View>
            <SideCards />
          </StageBody>
        </Stage>
      </Workspace>
      <SheetTabs>
        <SheetTab $w={131} $pad={9}><Svg w={10} h={13}><rect x="1.500" y="1.500" width="7" height="10" rx="2" /><path d="M1.500 4h7" /></Svg>Data Source</SheetTab>
        <SheetTab $w={136}>Total World Emission</SheetTab>
        <SheetTab $w={148} $pad={5} $active $ls={-0.16}>Top Countries Emission</SheetTab>
        <SheetTab $w={154}>Co2 Emission Over Time</SheetTab>
        <SheetTab $w={200} $pad={5}>Co2 Emission India vs United St...</SheetTab>
        <SheetTab $w={181} $pad={5.5} $ls={-0.1}>Total Emission by Continents</SheetTab>
        <SheetTab $w={154} $pad={5}>Co2 Emission Per Capita</SheetTab>
        <SheetTab $w={166} $pad={5} $ls={-0.07}>Co2 Emission by Internationa</SheetTab>
        <NewTab $w={32}><Svg w={16} h={15}><path d="M12.500 7V1.500h-11v10H8" /><path d="M4.500 9V7M6.500 9V4.500M8.500 9V6M10.500 7V5" /><path d={plus(12, 11, 3.500)} strokeWidth="2" /></Svg></NewTab>
        <NewTab $w={32}><Svg w={16} h={15}><path d="M12.500 7V1.500h-11v10H8M1.500 6.500h11M7 1.500v10" /><path d={plus(12, 11, 3.500)} strokeWidth="2" /></Svg></NewTab>
        <NewTab $w={32}><Svg w={16} h={15}><path d="M7 3 1.500 1.500v9L7 12zM7 3l5.500-1.500V8M7 12l1-.3" /><path d={plus(12, 11, 3.500)} strokeWidth="2" /></Svg></NewTab>
      </SheetTabs>
      <StatusBar>
        <StatusText $w={63}>10 marks</StatusText><StatusText $w={119} $ls={-0.2}>1 row by 10 columns</StatusText><StatusText $w={160} $ls={0.35}>SUM(Co2 (Co2)): 780,082</StatusText>
        <StatusCell $w={127} $push $pad={6} $gap={9}>
          <Svg w={10} h={13}><circle cx="5" cy="3.500" r="2.500" /><path d="M.5 12.500V9c0-2 9-2 9 0v3.500z" /></Svg>
          <StatusText $w={78}>Pavithra&nbsp; Kart...</StatusText><Caret $s={4} $tall $c="#111" />
        </StatusCell>
        <StatusCell $w={27} /><StatusCell $w={27} /><StatusCell $w={48} />
        <StatusCell $w={71} $pad={6} $gap={8}>
          <Svg w={8} h={8} stroke="none"><path d="M0 0h1.500v8H0zM7 0v8L2.500 4z" fill="#555" /></Svg>
          <Svg w={8} h={8} stroke="none"><path d="M6 0v8L1.500 4z" fill="#555" /></Svg>
          <Svg w={8} h={8} stroke="none"><path d="M2 0v8l4.500-4z" fill="#555" /></Svg>
          <Svg w={8} h={8} stroke="none"><path d="M5.500 0H7v8H5.500zM0 0v8l4.500-4z" fill="#555" /></Svg>
        </StatusCell>
        <StatusCell $w={67} $pad={7} $gap={10}>
          <Svg w={11} stroke="none"><path fill="#bbb" d="M0 0h3v3H0zM4 0h3v3H4zM8 0h3v3H8zM0 4h3v3H0zM4 4h3v3H4zM8 4h3v3H8zM0 8h3v3H0zM4 8h3v3H4zM8 8h3v3H8z" /></Svg>
          <Svg w={11} stroke="none"><path fill="#bbb" d="M0 0h11v7H0zM0 8h3v3H0zM4 8h3v3H4zM8 8h3v3H8z" /></Svg>
          <Svg w={11} stroke="none"><path fill="#666" d="M0 0h11v11H0z" /></Svg>
        </StatusCell>
      </StatusBar>
      <Taskbar>
        <TaskCell $w={48}><svg width="16" height="16" fill="#fff"><path d="m0 2.200 7-1v6.500H0zM8 1l8-1v7.700H8zM0 8.500h7V15l-7-1zM8 8.500h8V16l-8-1z" /></svg></TaskCell>
        <TaskSearch><Svg w={17} c="#111" s={1.300}><circle cx="10.500" cy="6.500" r="5.500" /><path d="M6.500 10.500.8 16.200" /></Svg>Type here to search</TaskSearch>
        <TaskCell $w={48}><Svg w={16} c="#fff" s={2}><circle cx="8" cy="8" r="6.700" /></Svg></TaskCell>
        <TaskCell $w={47}><Svg w={17} h={16} c="#fff" s={1.200}><path d="M1 0v3h10V0M1 16v-3h10v3M1 5.500h10v5H1zM15 0v4M15 9v7" /><path d="M14 5h2v3h-2z" fill="#fff" strokeWidth=".5" /></Svg></TaskCell>
        <TaskCell $w={54}><svg width="24" height="24"><path d="M7 5V1h10v4" fill="none" stroke="#29a9e8" strokeWidth="2" /><path d="M1 4h22v16a3 3 0 0 1-3 3H4a3 3 0 0 1-3-3z" fill="#f6f6f6" /><path fill="#f25022" d="M7 9h4v4H7z" /><path fill="#7fba00" d="M12 9h4v4h-4z" /><path fill="#00a4ef" d="M7 14h4v4H7z" /><path fill="#ffb900" d="M12 14h4v4h-4z" /></svg></TaskCell>
        <TaskCell $w={40} $ml={3} $line><svg width="22" height="20"><path d="M0 1h8l2 2h12v15H0z" fill="#e3a21a" /><path d="M0 4h22v15H0z" fill="#ffd75e" /><path d="M4 20v-8q0-2 2-2h10q2 0 2 2v8h-4v-5H8v5z" fill="#3f95dc" /></svg></TaskCell>
        <TaskCell $w={48} $ml={5}><ChromeLogo /></TaskCell>
        <TaskCell $w={50}><svg width="18" height="22"><path d="M0 0h18v22H0z" fill="#4b5a68" /><path d="M2 2h14v4H2z" fill="#50d4f5" /><path d="M2 8h4v3H2zM7 8h4v3H7zM2 12h4v3H2zM7 12h4v3H7zM2 16h4v4H2zM7 16h4v4H7zM12 8h4v3h-4z" fill="#ccd3d9" /><path d="M12 12h4v8h-4z" fill="#164f98" /></svg></TaskCell>
        <TaskCell $w={48}><svg width="22" height="22"><circle cx="11" cy="11" r="11" fill="#f4f6f6" /><circle cx="11" cy="11" r="9.300" fill="#0b86bd" /><path d="M2 9a9 9 0 0 1 8-7.300c5-.3 7 2 6 4-2-1.500-7-1.500-9 1.500s-2 8 0 10.500C3 16.500 1.500 13 2 9z" fill="#35c285" /><ellipse cx="10.500" cy="11" rx="5.200" ry="5.200" fill="#fff" /></svg></TaskCell>
        <TaskCell $w={49}><svg width="22" height="22"><rect width="22" height="22" rx="6" fill="#4a8cff" /><rect x="4" y="7" width="10" height="8" rx="2" fill="#fff" /><path d="m15 10 3-2.500v7L15 12z" fill="#fff" /></svg></TaskCell>
        <TaskCell $w={48}><svg width="22" height="24"><path d="M1 2h18v21H1z" fill="#f7f7e8" /><path d="M2 9h16v13H2z" fill="#aadb38" /><path d="M2 3h16" stroke="#777" strokeWidth="2" strokeDasharray="1 1.500" /><path d="M4 10v8M6 14h2M9 14h2" stroke="#222" strokeWidth="1.500" /><path d="m20 1-7 15-1 4 3-3 6.500-14z" fill="#f4a627" /></svg></TaskCell>
        <TaskCell $w={48} $ml={2} $on $line><svg width="24" height="24"><path d="M0 0h24v24H0z" fill="#f3f5f7" /><g transform="translate(3 3)"><TableauMark mono="#48718e" /></g></svg></TaskCell>
        <TaskCell $w={40} $ml={5} $line><svg width="26" height="26" viewBox="0 0 26 26"><ChromeLogo /><circle cx="19" cy="18" r="7" fill="#55345e" /><path d="m14 16 3 1 1-3 2 3 3-2M14 20l4-1 2 3 3-3" stroke="#9a6da3" fill="none" /></svg></TaskCell>
        <Tray />
      </Taskbar>
    </Window>
  );
}
